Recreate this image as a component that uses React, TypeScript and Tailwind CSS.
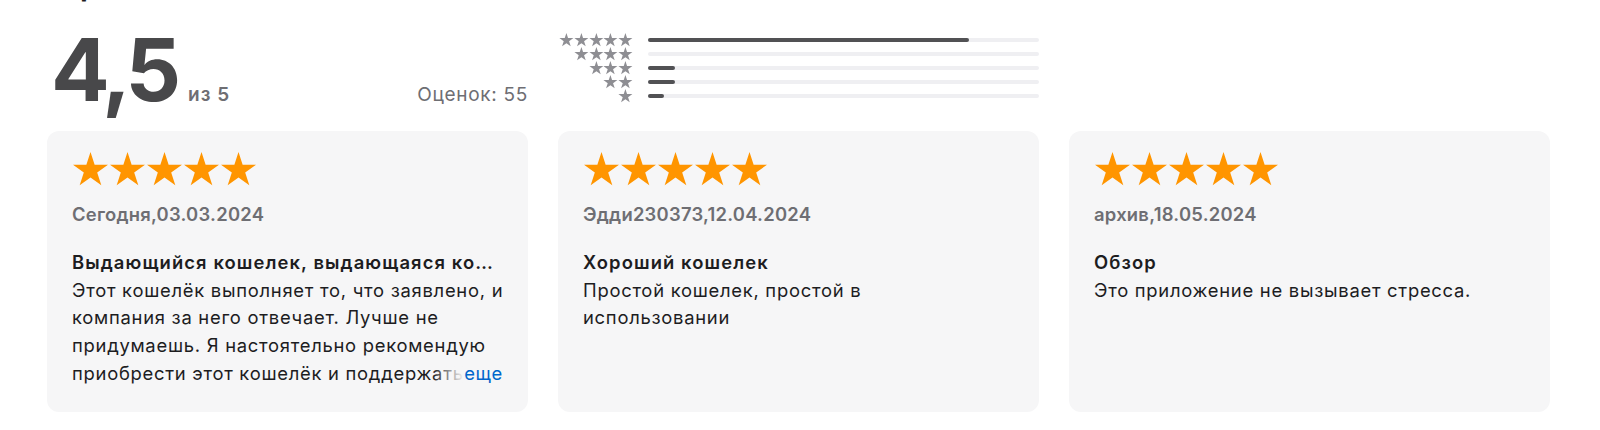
import React from "react";

const STAR = "18.5,0 22.63,12.71 36,12.71 25.19,20.57 29.32,33.29 18.5,25.43 7.68,33.29 11.81,20.57 1,12.71 14.37,12.71";

function Star({ className, color }: { className: string; color: string }) {
  return (
    <svg viewBox="0 0 37 34" className={className} aria-hidden="true">
      <polygon points={STAR} fill={color} />
    </svg>
  );
}

const hist = [
  { stars: 5, pct: 82 },
  { stars: 4, pct: 0 },
  { stars: 3, pct: 7 },
  { stars: 2, pct: 7 },
  { stars: 1, pct: 4 },
];

type Review = { meta: string; title: string; lines: string[]; more?: boolean };

const reviews: Review[] = [
  {
    meta: "Сегодня,03.03.2024",
    title: "Выдающийся кошелек, выдающаяся компания",
    lines: [
      "Этот кошелёк выполняет то, что заявлено, и",
      "компания за него отвечает. Лучше не",
      "придумаешь. Я настоятельно рекомендую",
      "приобрести этот кошелёк и поддержать эту компанию.",
    ],
    more: true,
  },
  {
    meta: "Эдди230373,12.04.2024",
    title: "Хороший кошелек",
    lines: ["Простой кошелек, простой в", "использовании"],
  },
  {
    meta: "архив,18.05.2024",
    title: "Обзор",
    lines: ["Это приложение не вызывает стресса."],
  },
];

function ReviewCard({ r }: { r: Review }) {
  return (
    <div className="rounded-[12px] bg-[#f6f6f7] px-[25px] pt-[21px] pb-[24px] min-w-0">
      <div className="flex">
        {[0, 1, 2, 3, 4].map((i) => (
          <Star key={i} className="w-[37px] h-[34px]" color="#ff9500" />
        ))}
      </div>
      <div className="mt-[17px] text-[18.4px] leading-[22px] tracking-[0.25px] font-semibold text-[#6e6e73]">
        {r.meta}
      </div>
      <div className="mt-[24px] text-[18.4px] leading-[27.7px] tracking-[1.1px] font-semibold text-[#1d1d1f] truncate">
        {r.title}
      </div>
      <div className="relative max-h-[110.8px] overflow-hidden">
        {r.lines.map((l, i) => (
          <span
            key={i}
            className="block whitespace-nowrap text-[18.4px] leading-[27.7px] tracking-[0.73px] text-[#1d1d1f]"
          >
            {l}
          </span>
        ))}
        {r.more && (
          <div className="absolute right-0 bottom-0 flex items-stretch">
            <div className="w-[32px] bg-gradient-to-r from-[#f6f6f7]/0 to-[#f6f6f7]" />
            <span className="bg-[#f6f6f7] text-[18.4px] leading-[27.7px] tracking-[0.73px] text-[#0066cc]">еще</span>
          </div>
        )}
      </div>
    </div>
  );
}

export default function App() {
  return (
    <div className="w-[1600px] h-[430px] overflow-hidden bg-white pl-[47px] pr-[50px] font-['Inter','Noto_Sans',sans-serif]">
      <div className="flex justify-between items-end h-[5px] overflow-hidden">
        <h2 className="text-[28px] leading-[1.3] font-bold text-[#1d1d1f]">Оценки и отзывы</h2>
        <a className="text-[19px] leading-[1.3] text-[#0066cc]">См. все</a>
      </div>

      <div className="grid grid-cols-3 gap-x-[30px]">
        <div className="flex items-baseline justify-between pt-[21px]">
          <div className="flex items-baseline">
            <span className="pl-[4px] text-[87px] leading-none font-bold tracking-[-5px] text-[#48484a]">4,5</span>
            <span className="ml-[12px] text-[19px] font-semibold tracking-[1px] text-[#6e6e73]">из 5</span>
          </div>
          <span className="text-[19px] tracking-[0.7px] text-[#6e6e73]">Оценок: 55</span>
        </div>

        <div className="mt-[28px] flex flex-col">
          {hist.map((h) => (
            <div key={h.stars} className="flex items-center h-[14px]">
              <div className="w-[75px] flex justify-end">
                {Array.from({ length: h.stars }).map((_, i) => (
                  <Star key={i} className="w-[14.8px] h-[13.6px]" color="#8e8e93" />
                ))}
              </div>
              <div className="ml-[15px] flex-1 h-[3.5px] rounded-full bg-[#efeff2]">
                <div className="h-full rounded-full bg-[#515154]" style={{ width: `${h.pct}%` }} />
              </div>
            </div>
          ))}
        </div>
        <div />
      </div>

      <div className="mt-[18px] grid grid-cols-3 gap-x-[30px]">
        {reviews.map((r, i) => (
          <ReviewCard key={i} r={r} />
        ))}
      </div>
    </div>
  );
}
